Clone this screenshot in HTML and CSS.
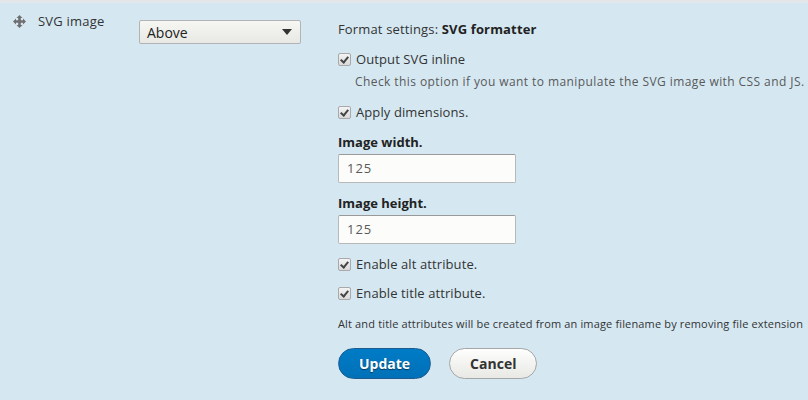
FILE: index.html
```html
<!DOCTYPE html>
<html lang="en">
  <head>
    <meta charset="UTF-8" />
    <title>Manage display</title>
    <link rel="stylesheet" href="styles.css">
  </head>
  <body>
    <div class="field-row">
      <div class="cell-name">
        <span class="handle">
          <svg width="13" height="13" viewBox="0 0 13 13">
            <path d="M6.5 0 L9.5 3 H7.8 V5.2 H10 V3.5 L13 6.5 L10 9.5 V7.8 H7.8 V10 H9.5 L6.5 13 L3.5 10 H5.2 V7.8 H3 V9.5 L0 6.5 L3 3.5 V5.2 H5.2 V3 H3.5 Z" fill="#6f6f6f"/>
          </svg>
        </span>
        <span class="field-label">SVG image</span>
      </div>
      <div class="cell-type">
        <div class="select">
          <span>Above</span>
          <span class="select-arrow"></span>
        </div>
      </div>
      <div class="cell-settings">
        <div class="settings-title">Format settings: <strong>SVG formatter</strong></div>

        <div class="check-item first"><span class="checkbox"></span>Output SVG inline</div>
        <div class="description">Check this option if you want to manipulate the SVG image with CSS and JS.</div>

        <div class="check-item apply"><span class="checkbox"></span>Apply dimensions.</div>

        <div class="form-label">Image width.</div>
        <div class="text-input">125</div>

        <div class="form-label second">Image height.</div>
        <div class="text-input">125</div>

        <div class="check-item alt"><span class="checkbox"></span>Enable alt attribute.</div>
        <div class="check-item title-attr"><span class="checkbox"></span>Enable title attribute.</div>

        <div class="small-note">Alt and title attributes will be created from an image filename by removing file extension</div>

        <div class="actions">
          <button class="button button-primary">Update</button>
          <button class="button">Cancel</button>
        </div>
      </div>
    </div>
  </body>
</html>
```

FILE: styles.css
```css
body {
  margin: 0;
  overflow: hidden;
  background-color: #d5e8f2;
  font-family: "Open Sans", "DejaVu Sans", sans-serif;
  color: #333;
}

.field-row {
  display: flex;
  align-items: flex-start;
  height: 400px;
  border-top: 3px solid #e3e7ea;
  box-sizing: border-box;
}

.cell-name {
  width: 139px;
  display: flex;
  align-items: center;
  padding: 9px 0 0 13px;
  box-sizing: border-box;
}

.handle {
  display: flex;
  width: 25px;
}

.field-label {
  font-size: 13px;
  line-height: 18px;
  color: #333;
  letter-spacing: 0.2px;
}

.cell-type {
  width: 199px;
  padding-top: 17px;
}

.select {
  display: flex;
  align-items: center;
  justify-content: space-between;
  width: 162px;
  height: 24px;
  padding: 0 8px 0 7px;
  box-sizing: border-box;
  border: 1px solid #b3b3b3;
  border-radius: 2px;
  background: linear-gradient(#f6f6f3, #e8e8e4);
  font-size: 14px;
  color: #222;
}

.select-arrow {
  width: 0;
  height: 0;
  border-left: 5px solid transparent;
  border-right: 5px solid transparent;
  border-top: 6px solid #333;
}

.cell-settings {
  flex: 1;
  padding-top: 17px;
  font-size: 13px;
  line-height: 18px;
  white-space: nowrap;
}

.settings-title {
  letter-spacing: 0.15px;
}

.settings-title strong {
  color: #222;
}

.check-item {
  display: flex;
  align-items: center;
  color: #333;
  letter-spacing: 0.1px;
}

.check-item.first { margin-top: 12px; }
.check-item.apply { margin-top: 13px; }
.check-item.alt { margin-top: 11px; }
.check-item.title-attr { margin-top: 11px; }

.checkbox {
  position: relative;
  width: 11px;
  height: 11px;
  margin-right: 5px;
  border: 1px solid #a9a9a9;
  border-radius: 2px;
  background: linear-gradient(#f4f4f4, #d9d9d9);
}

.checkbox::after {
  content: "";
  position: absolute;
  left: 2px;
  top: 4px;
  width: 3px;
  height: 6px;
  border: solid #444;
  border-width: 0 2px 2px 0;
  transform: translate(1px, -3px) rotate(40deg);
}

.description {
  margin-top: 6px;
  padding-left: 17px;
  font-size: 12px;
  line-height: 16px;
  color: #595959;
  letter-spacing: 0.42px;
}

.form-label {
  margin-top: 12px;
  font-weight: bold;
  color: #222;
}

.form-label.second {
  margin-top: 11px;
}

.text-input {
  margin-top: 3px;
  width: 178px;
  height: 29px;
  padding: 0 8px;
  box-sizing: border-box;
  border: 1px solid #b8b8b8;
  border-top-color: #999;
  border-radius: 2px;
  background: #fcfcfa;
  font-size: 13px;
  line-height: 27px;
  color: #595959;
  letter-spacing: 1px;
}

.small-note {
  margin-top: 14px;
  font-size: 11px;
  line-height: 15px;
  color: #333;
  letter-spacing: 0.15px;
}

.actions {
  display: flex;
  gap: 18px;
  margin-top: 17px;
}

.button {
  height: 31px;
  padding: 0 20px;
  border: 1px solid #a6a6a6;
  border-radius: 20em;
  background: linear-gradient(#fefefe, #e8e8e4);
  font-family: "Open Sans", "DejaVu Sans", sans-serif;
  font-size: 14px;
  font-weight: bold;
  color: #333;
}

.button-primary {
  border-color: #1e5c90;
  background: linear-gradient(#007bc6, #0071b8);
  color: #fff;
  text-shadow: 0 1px 1px rgba(0, 0, 0, 0.5);
}
```
